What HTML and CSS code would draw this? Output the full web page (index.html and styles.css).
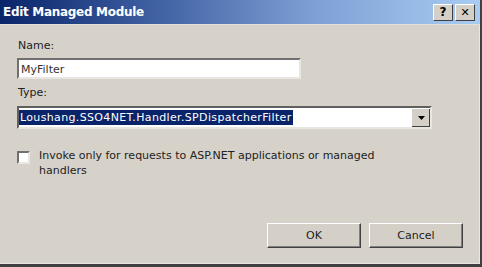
FILE: index.html
```html
<!DOCTYPE html>
<html>
<head>
    <link rel="stylesheet" href="styles.css">
</head>
<body>
    <div class="dialog">
        <div class="titlebar">
            <span class="title">Edit Managed Module</span>
            <div class="caption-buttons">
                <span class="cap-btn">?</span>
                <span class="cap-btn close">&#x2715;</span>
            </div>
        </div>

        <div class="content">
            <label class="field-label">Name:</label>
            <div class="textbox">MyFilter</div>

            <label class="field-label type-label">Type:</label>
            <div class="combo">
                <div class="combo-text"><span class="selected">Loushang.SSO4NET.Handler.SPDispatcherFilter</span></div>
                <div class="combo-btn">
                    <svg width="7" height="4" viewBox="0 0 7 4"><path d="M0 0 H7 L3.5 4 Z" fill="#000"/></svg>
                </div>
            </div>

            <div class="check-row">
                <span class="checkbox"></span>
                <span class="check-text">Invoke only for requests to ASP.NET applications or managed handlers</span>
            </div>

            <div class="buttons">
                <button class="btn">OK</button>
                <button class="btn">Cancel</button>
            </div>
        </div>
    </div>
</body>
</html>
```

FILE: styles.css
```css
body {
    margin: 0;
    width: 482px;
    height: 267px;
    overflow: hidden;
    background: #d4d0c8;
    font-family: "DejaVu Sans", "Liberation Sans", sans-serif;
    font-size: 11px;
    color: #000;
}

.dialog {
    box-sizing: border-box;
    width: 482px;
    height: 267px;
    display: flex;
    flex-direction: column;
    background: #d6d2ca;
    border-right: 2px solid #404040;
    border-bottom: 3px solid #404040;
    box-shadow: inset -1px -1px 0 #e8e6e0;
}

.titlebar {
    height: 24px;
    flex: none;
    display: flex;
    align-items: center;
    justify-content: space-between;
    padding: 0 5px 0 3px;
    border-bottom: 1px solid #e4e0d8;
    background: linear-gradient(to right, #0a246a 0%, #3b5c9e 30%, #7d9fd4 65%, #a8ccf2 100%);
}

.title {
    color: #fff;
    font-family: "DejaVu Sans", sans-serif;
    font-weight: bold;
    font-size: 12px;
    letter-spacing: -0.3px;
}

.caption-buttons {
    display: flex;
    gap: 2px;
}

.cap-btn {
    box-sizing: border-box;
    width: 20px;
    height: 17px;
    display: flex;
    align-items: center;
    justify-content: center;
    background: #d4d0c8;
    border: 1px solid;
    border-color: #fff #404040 #404040 #fff;
    font-weight: bold;
    font-size: 12px;
    line-height: 1;
}

.cap-btn.close {
    font-size: 11px;
}

.content {
    flex: 1;
    display: flex;
    flex-direction: column;
    padding: 13px 0 0 17px;
}

.field-label {
    height: 15px;
    line-height: 15px;
    color: #222;
    margin-left: 1px;
}

.textbox {
    box-sizing: border-box;
    width: 284px;
    height: 21px;
    margin-top: 5px;
    padding: 2px 2px;
    background: #fff;
    border: 2px solid;
    border-color: #707070 #e8e6e0 #e8e6e0 #707070;
    line-height: 15px;
    color: #333;
}

.type-label {
    margin-top: 6px;
}

.combo {
    box-sizing: border-box;
    width: 415px;
    height: 23px;
    margin-top: 6px;
    display: flex;
    background: #fff;
    border: 2px solid;
    border-color: #606060 #e8e6e0 #e8e6e0 #606060;
}

.combo-text {
    flex: 1;
    padding: 2px 0 0 0;
}

.selected {
    display: inline-block;
    background: #0a246a;
    color: #fff;
    line-height: 15px;
    padding: 0 1px;
    letter-spacing: 0.35px;
}

.combo-btn {
    width: 18px;
    display: flex;
    align-items: center;
    justify-content: center;
    background: #d4d0c8;
    border-left: 1px solid #fff;
    border-top: 1px solid #fff;
    box-shadow: inset -1px -1px 0 #404040;
}

.check-row {
    display: flex;
    align-items: flex-start;
    margin-top: 19px;
    width: 400px;
}

.checkbox {
    box-sizing: border-box;
    flex: none;
    width: 13px;
    height: 13px;
    margin-top: 3px;
    background: #fff;
    border: 2px solid;
    border-color: #707070 #e8e6e0 #e8e6e0 #707070;
}

.check-text {
    margin-left: 9px;
    line-height: 15px;
    color: #222;
    width: 360px;
}

.buttons {
    display: flex;
    justify-content: flex-end;
    gap: 8px;
    margin-top: auto;
    margin-bottom: 16px;
    margin-right: 17px;
}

.btn {
    box-sizing: border-box;
    width: 94px;
    height: 25px;
    background: #d4d0c8;
    border: 1px solid;
    border-color: #fff #404040 #404040 #fff;
    box-shadow: inset -1px -1px 0 #808080;
    font-family: "DejaVu Sans", sans-serif;
    font-size: 11px;
    color: #222;
    padding: 0;
}
```
